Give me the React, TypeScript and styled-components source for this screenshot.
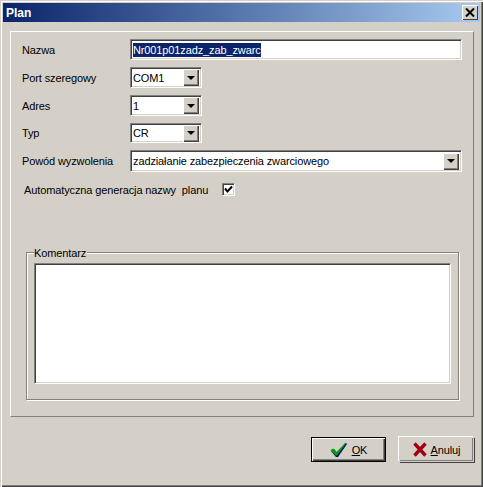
import React from "react";
import styled, { createGlobalStyle, css } from "styled-components";

const GlobalStyle = createGlobalStyle`
  html, body {
    margin: 0;
    padding: 0;
    background: #d4d0c8;
  }
`;

const sunken = css`
  box-sizing: border-box;
  background: #ffffff;
  border-style: solid;
  border-width: 1px;
  border-color: #808080 #ffffff #ffffff #808080;
  box-shadow: inset 1px 1px 0 #404040, inset -1px -1px 0 #d4d0c8;
`;

const Window = styled.div`
  box-sizing: border-box;
  width: 483px;
  height: 487px;
  padding: 3px 3px 0 3px;
  background: #d4d0c8;
  font-family: "Liberation Sans", Arial, sans-serif;
  font-size: 11px;
  letter-spacing: -0.12px;
  color: #000000;
  box-shadow: inset 1px 1px 0 #d4d0c8, inset 2px 2px 0 #ffffff, inset -1px -1px 0 #404040, inset -2px -2px 0 #808080;
  overflow: hidden;
`;

const TitleBar = styled.div`
  display: flex;
  justify-content: space-between;
  align-items: center;
  height: 19px;
  padding: 0 2px 0 3px;
  background: linear-gradient(90deg, #0a246a, #a6caf0);
`;

const Title = styled.span`
  color: #ffffff;
  font-weight: bold;
  font-size: 12px;
  letter-spacing: 0;
`;

const CloseButton = styled.div`
  box-sizing: border-box;
  display: flex;
  align-items: center;
  justify-content: center;
  width: 16px;
  height: 15px;
  background: #d4d0c8;
  box-shadow: inset 1px 1px 0 #ffffff, inset -1px -1px 0 #404040;
`;

const Panel = styled.div`
  box-sizing: border-box;
  width: 464px;
  height: 386px;
  margin: 9px 0 0 7px;
  padding: 7px 11px 0 11px;
  border-style: solid;
  border-width: 1px;
  border-color: #ffffff #808080 #808080 #ffffff;
`;

const Fields = styled.div`
  display: grid;
  grid-template-columns: 108px 1fr;
  grid-template-rows: 21px 21px 21px 20px 22px;
  row-gap: 7px;
  align-items: center;
`;

const Label = styled.label`
  white-space: nowrap;
`;

const Field = styled.div<{ $width: number }>`
  ${sunken}
  display: flex;
  align-items: center;
  justify-content: space-between;
  width: ${(p) => p.$width}px;
  height: 100%;
  padding: 0 2px 0 2px;
  white-space: nowrap;
  overflow: hidden;
`;

const Selected = styled.span`
  background: #0a246a;
  color: #ffffff;
  padding: 1px 0;
`;

const ArrowButton = styled.div`
  box-sizing: border-box;
  display: flex;
  align-items: center;
  justify-content: center;
  flex: none;
  width: 16px;
  height: 17px;
  background: #d4d0c8;
  box-shadow: inset 1px 1px 0 #ffffff, inset -1px -1px 0 #404040, inset -2px -2px 0 #808080;

  &::after {
    content: "";
    border-style: solid;
    border-width: 4px 4px 0 4px;
    border-color: #000000 transparent transparent transparent;
  }
`;

const CheckRow = styled.div`
  display: flex;
  align-items: center;
  height: 13px;
  margin: 11px 0 0 2px;
`;

const CheckLabel = styled.label`
  width: 198px;
  white-space: pre;
`;

const CheckBox = styled.div`
  ${sunken}
  display: flex;
  align-items: center;
  justify-content: center;
  width: 13px;
  height: 13px;
`;

const Group = styled.div`
  position: relative;
  box-sizing: border-box;
  width: 433px;
  height: 148px;
  margin: 56px 0 0 4px;
  padding: 10px 0 0 7px;
  border: 1px solid #808080;
  box-shadow: inset 1px 1px 0 #ffffff, 1px 1px 0 #ffffff;
`;

const GroupTitle = styled.span`
  position: absolute;
  top: -6px;
  left: 7px;
  padding: 0 1px 0 0;
  background: #d4d0c8;
`;

const Memo = styled.div`
  ${sunken}
  width: 417px;
  height: 121px;
`;

const Footer = styled.div`
  display: flex;
  justify-content: flex-end;
  gap: 13px;
  margin: 20px 6px 0 0;
`;

const Button = styled.div<{ $default?: boolean }>`
  box-sizing: border-box;
  display: flex;
  align-items: center;
  justify-content: center;
  gap: 4px;
  width: 75px;
  height: 25px;
  background: #d4d0c8;
  border: 1px solid ${(p) => (p.$default ? "#000000" : "transparent")};
  box-shadow: ${(p) =>
    p.$default
      ? "inset 1px 1px 0 #ffffff, inset -1px -1px 0 #404040, inset -2px -2px 0 #808080"
      : "-1px -1px 0 #ffffff, 1px 1px 0 #404040, inset -1px -1px 0 #808080"};
`;

const Hotkey = styled.span`
  text-decoration: underline;
`;

const CloseIcon = () => (
  <svg width="10" height="9" viewBox="0 0 10 9">
    <path d="M1 0.5 L9 8.5 M9 0.5 L1 8.5" stroke="#000" strokeWidth="2" />
  </svg>
);

const CheckMark = () => (
  <svg width="9" height="9" viewBox="0 0 9 9">
    <path d="M1 3.5 L3.5 6.5 L8 1.5" fill="none" stroke="#000" strokeWidth="2" />
  </svg>
);

const OkIcon = () => (
  <svg width="18" height="15" viewBox="0 0 18 15">
    <path d="M1 9 L4 7 L7 11 L16 1 L17 2 L8 15 L6 15 Z" fill="#000080" />
    <path d="M0.5 8 L3.5 6.5 L6.5 10 L15.5 0.5 L16 1.5 L7 13.5 L5.5 13.5 Z" fill="#00a000" />
  </svg>
);

const CancelIcon = () => (
  <svg width="14" height="15" viewBox="0 0 14 15">
    <path d="M1.5 1.5 L12.5 13.5 M12.5 1.5 L1.5 13.5" stroke="#a00010" strokeWidth="3.4" />
  </svg>
);

export default function App() {
  return (
    <>
      <GlobalStyle />
      <Window>
        <TitleBar>
          <Title>Plan</Title>
          <CloseButton>
            <CloseIcon />
          </CloseButton>
        </TitleBar>
        <Panel>
          <Fields>
            <Label>Nazwa</Label>
            <Field $width={332}>
              <Selected>Nr001p01zadz_zab_zwarc</Selected>
            </Field>
            <Label>Port szeregowy</Label>
            <Field $width={72}>
              COM1
              <ArrowButton />
            </Field>
            <Label>Adres</Label>
            <Field $width={72}>
              1
              <ArrowButton />
            </Field>
            <Label>Typ</Label>
            <Field $width={72}>
              CR
              <ArrowButton />
            </Field>
            <Label>Powód wyzwolenia</Label>
            <Field $width={332}>
              zadziałanie zabezpieczenia zwarciowego
              <ArrowButton />
            </Field>
          </Fields>
          <CheckRow>
            <CheckLabel>Automatyczna generacja nazwy  planu</CheckLabel>
            <CheckBox>
              <CheckMark />
            </CheckBox>
          </CheckRow>
          <Group>
            <GroupTitle>Komentarz</GroupTitle>
            <Memo />
          </Group>
        </Panel>
        <Footer>
          <Button $default>
            <OkIcon />
            <span>
              <Hotkey>O</Hotkey>K
            </span>
          </Button>
          <Button>
            <CancelIcon />
            <span>
              <Hotkey>A</Hotkey>nuluj
            </span>
          </Button>
        </Footer>
      </Window>
    </>
  );
}
